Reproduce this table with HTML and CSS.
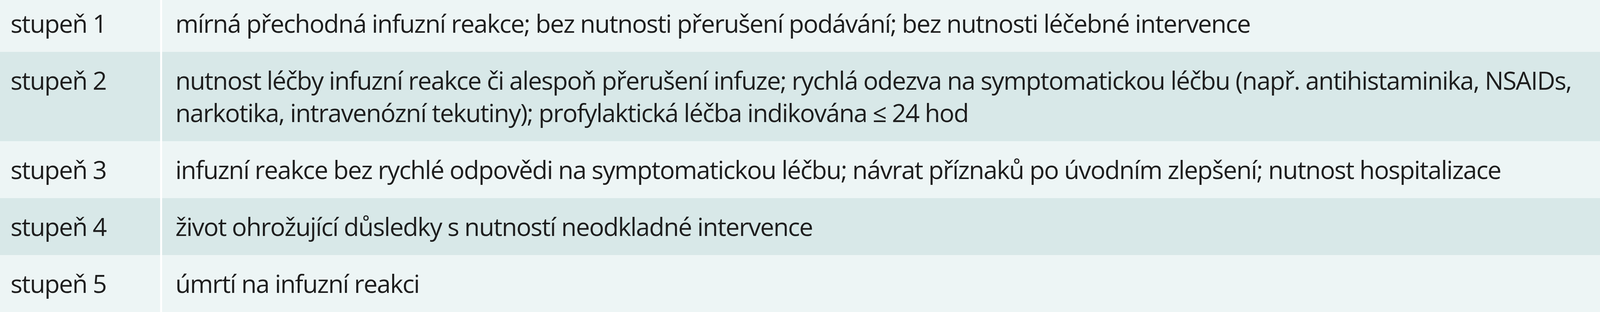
FILE: index.html
```html
<!DOCTYPE html>
<html lang="cs">
<head>
<meta charset="utf-8">
<title>Stupně infuzní reakce</title>
<link rel="stylesheet" href="styles.css">
</head>
<body>
<table class="grades">
  <tbody>
    <tr class="row-light">
      <td class="grade">stupeň 1</td>
      <td class="desc">mírná přechodná infuzní reakce; bez nutnosti přerušení podávání; bez nutnosti léčebné intervence</td>
    </tr>
    <tr class="row-dark">
      <td class="grade">stupeň 2</td>
      <td class="desc">nutnost léčby infuzní reakce či alespoň přerušení infuze; rychlá odezva na symptomatickou léčbu (např. antihistaminika, NSAIDs,<br>narkotika, intravenózní tekutiny); profylaktická léčba indikována ≤ 24 hod</td>
    </tr>
    <tr class="row-light">
      <td class="grade">stupeň 3</td>
      <td class="desc">infuzní reakce bez rychlé odpovědi na symptomatickou léčbu; návrat příznaků po úvodním zlepšení; nutnost hospitalizace</td>
    </tr>
    <tr class="row-dark">
      <td class="grade">stupeň 4</td>
      <td class="desc">život ohrožující důsledky s nutností neodkladné intervence</td>
    </tr>
    <tr class="row-light">
      <td class="grade">stupeň 5</td>
      <td class="desc">úmrtí na infuzní reakci</td>
    </tr>
  </tbody>
</table>
</body>
</html>
```

FILE: styles.css
```css
html, body {
  margin: 0;
  padding: 0;
  background: #edf5f5;
}

.grades {
  width: 100%;
  margin-top: -13px;
  border-collapse: separate;
  border-spacing: 0;
  table-layout: fixed;
  font-family: "Open Sans", "Noto Sans", sans-serif;
  font-size: 64px;
  letter-spacing: -1.9px;
  line-height: 83px;
  color: #1e1e1e;
}

.grades td {
  padding-top: 31px;
  padding-bottom: 32px;
  vertical-align: top;
}

.grade {
  box-sizing: border-box;
  width: 10.13%;
  padding-left: 27px;
  border-right: 5px solid #ffffff;
  white-space: nowrap;
}

.desc {
  padding-left: 34px;
  padding-right: 30px;
}

.row-light td {
  background: #edf5f5;
}

.row-dark td {
  background: #d8e8e8;
}
```
